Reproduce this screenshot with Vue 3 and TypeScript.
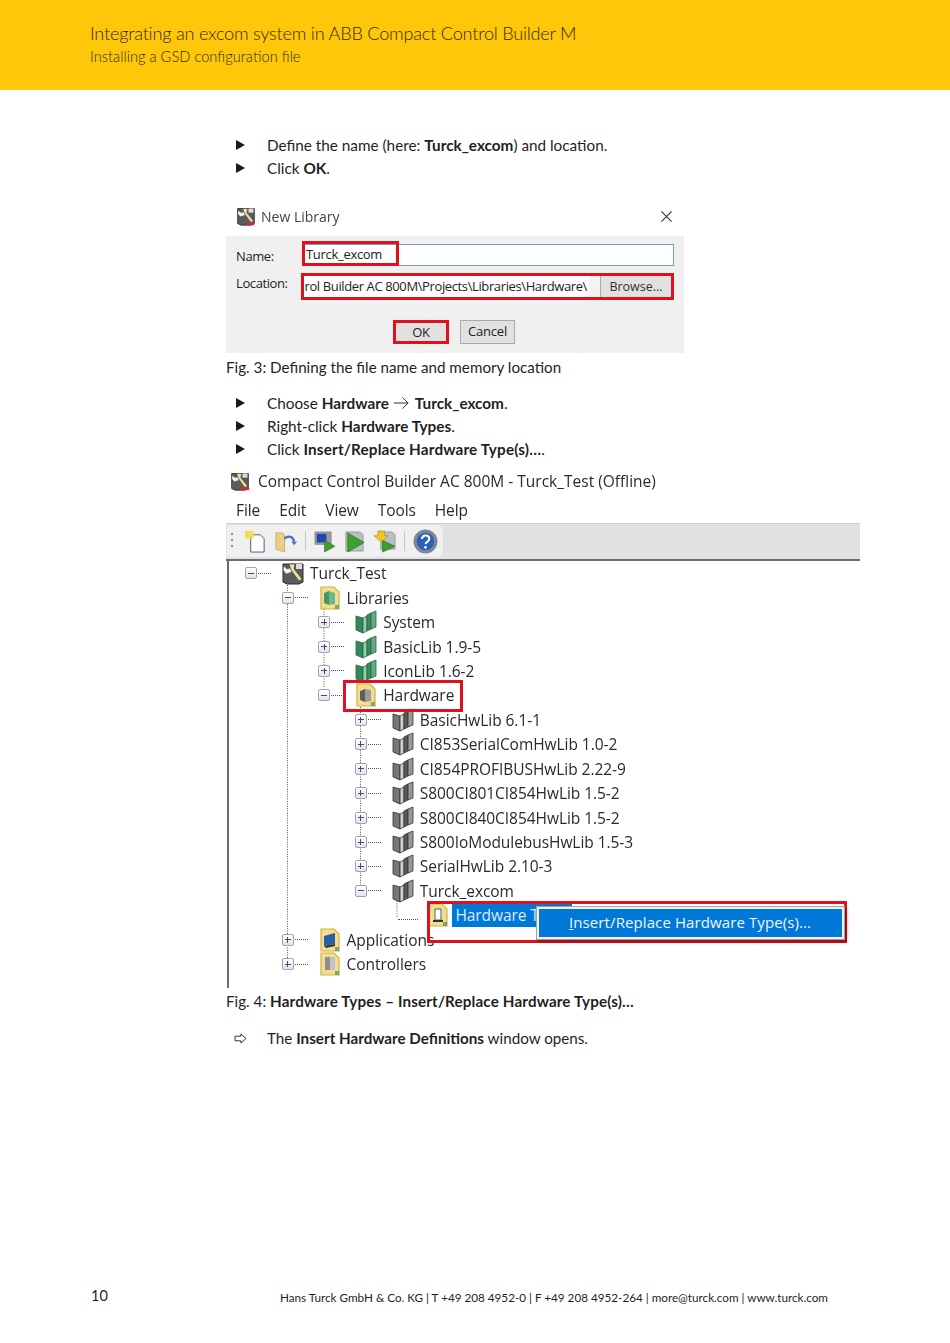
<script setup lang="ts">
interface Row {
  label: string
  depth: number
  exp: '' | 'plus' | 'minus'
  icon: string
  selected?: boolean
}

const rows: Row[] = [
  { label: 'Turck_Test', depth: 0, exp: 'minus', icon: 'root' },
  { label: 'Libraries', depth: 1, exp: 'minus', icon: 'f-lib' },
  { label: 'System', depth: 2, exp: 'plus', icon: 'book-g' },
  { label: 'BasicLib 1.9-5', depth: 2, exp: 'plus', icon: 'book-g' },
  { label: 'IconLib 1.6-2', depth: 2, exp: 'plus', icon: 'book-g' },
  { label: 'Hardware', depth: 2, exp: 'minus', icon: 'f-hw' },
  { label: 'BasicHwLib 6.1-1', depth: 3, exp: 'plus', icon: 'book-k' },
  { label: 'CI853SerialComHwLib 1.0-2', depth: 3, exp: 'plus', icon: 'book-k' },
  { label: 'CI854PROFIBUSHwLib 2.22-9', depth: 3, exp: 'plus', icon: 'book-k' },
  { label: 'S800CI801CI854HwLib 1.5-2', depth: 3, exp: 'plus', icon: 'book-k' },
  { label: 'S800CI840CI854HwLib 1.5-2', depth: 3, exp: 'plus', icon: 'book-k' },
  { label: 'S800IoModulebusHwLib 1.5-3', depth: 3, exp: 'plus', icon: 'book-k' },
  { label: 'SerialHwLib 2.10-3', depth: 3, exp: 'plus', icon: 'book-k' },
  { label: 'Turck_excom', depth: 3, exp: 'minus', icon: 'book-k' },
  { label: 'Hardware Types', depth: 4, exp: '', icon: 'f-type', selected: true },
  { label: 'Applications', depth: 1, exp: 'plus', icon: 'f-app' },
  { label: 'Controllers', depth: 1, exp: 'plus', icon: 'f-ctl' }
]

const rowIndent = (d: number) => ({ paddingLeft: `${16 + d * 36.6}px` })

const vLines = [
  { x: 60.5, y1: 24, y2: 403 },
  { x: 97, y1: 48, y2: 126 },
  { x: 133.5, y1: 146, y2: 326 },
  { x: 170, y1: 340, y2: 357 }
]
</script>

<template>
  <div class="page">
    <svg class="defs" width="0" height="0" aria-hidden="true">
      <symbol id="book-g" viewBox="0 0 24 24">
        <path d="M2 6l7 2v15l-7-3z" fill="#2f8a5a" stroke="#2f5f48" stroke-width=".8" />
        <path d="M9 8l4-2v15l-4 2z" fill="#8fd0aa" stroke="#2f5f48" stroke-width=".8" />
        <path d="M13 5l4-2v16l-4 2z" fill="#3b8a5e" stroke="#2f5f48" stroke-width=".8" />
        <path d="M17 3l5-2v16l-5 2z" fill="#5fae82" stroke="#2f5f48" stroke-width=".8" />
      </symbol>
      <symbol id="book-k" viewBox="0 0 24 24">
        <path d="M2 6l7 2v15l-7-3z" fill="#777" stroke="#333" stroke-width=".8" />
        <path d="M9 8l4-2v15l-4 2z" fill="#d0d0d0" stroke="#333" stroke-width=".8" />
        <path d="M13 5l4-2v16l-4 2z" fill="#5b5b5b" stroke="#333" stroke-width=".8" />
        <path d="M17 3l5-2v16l-5 2z" fill="#999" stroke="#333" stroke-width=".8" />
      </symbol>
      <symbol id="root" viewBox="0 0 24 24">
        <path d="M2 3h20v18l-4 2H6l-4-2z" fill="#5a5a60" stroke="#2d2d30" />
        <path d="M8 3l2 6 8 11 3-2-8-10 1-5z" fill="#efe3a8" stroke="#5a5230" stroke-width=".8" />
        <path d="M3 5l3 3 3-1 2 4-6 2-3-4z" fill="#f5f5f5" stroke="#444" stroke-width=".5" />
        <path d="M15 3h6v5h-6z" fill="#dcdcdc" />
      </symbol>
      <symbol id="folder" viewBox="0 0 20 24">
        <path d="M1 1h13l5 5v17H1z" fill="#f3dd8e" stroke="#d6ae48" stroke-width="1.200" />
      </symbol>
    </svg>

    <header class="hero">
      <div class="hero-title">Integrating an excom system in ABB Compact Control Builder M</div>
      <div class="hero-sub">Installing a GSD configuration file</div>
    </header>

    <main class="content">
      <ul class="steps first">
        <li><i class="tri"></i><span>Define the name (here: <b>Turck_excom</b>) and location.</span></li>
        <li><i class="tri"></i><span>Click <b>OK</b>.</span></li>
      </ul>

      <figure class="dialog shot">
        <div class="dlg-title">
          <svg class="dlg-icon" viewBox="0 0 24 24">
            <use href="#root" />
            <path d="M12 20h10v3H12z" fill="#d8262c" />
          </svg>
          <span>New Library</span>
          <svg class="dlg-x" viewBox="0 0 14 14"><path d="M1.500 1.500l11 11M12.500 1.500l-11 11" stroke="#333" stroke-width="1.200" /></svg>
        </div>
        <div class="dlg-body">
          <div class="dlg-row name">
            <label>Name:</label>
            <div class="input">
              <span class="name-val">Turck_excom</span>
            </div>
          </div>
          <div class="dlg-row loc">
            <label>Location:</label>
            <div class="loc-box">
              <div class="loc-input"><span>rol Builder AC 800M\Projects\Libraries\Hardware\</span></div>
              <div class="loc-gap"></div>
              <div class="browse">Browse...</div>
            </div>
          </div>
          <div class="dlg-btns">
            <div class="btn ok">OK</div>
            <div class="btn">Cancel</div>
          </div>
        </div>
      </figure>
      <figcaption class="cap cap1">Fig. 3: Defining the file name and memory location</figcaption>

      <ul class="steps second">
        <li>
          <i class="tri"></i>
          <span>Choose <b>Hardware</b>
            <svg class="arrow" viewBox="0 0 18 14"><path d="M1 7h15M10 1l6 6-6 6" fill="none" stroke="#222" stroke-width="1" /></svg>
            <b>Turck_excom</b>.</span>
        </li>
        <li><i class="tri"></i><span>Right-click <b>Hardware Types</b>.</span></li>
        <li><i class="tri"></i><span>Click <b class="wide">Insert/Replace Hardware Type(s)…</b>.</span></li>
      </ul>

      <figure class="app shot">
        <div class="app-title">
          <svg class="app-icon" viewBox="0 0 24 24">
            <use href="#root" />
            <path d="M12 20h11v3H12z" fill="#d8262c" />
          </svg>
          <span>Compact Control Builder AC 800M - Turck_Test (Offline)</span>
        </div>
        <nav class="menu">
          <span>File</span><span>Edit</span><span>View</span><span>Tools</span><span>Help</span>
        </nav>
        <div class="toolbar">
          <div class="tool-group">
            <i class="grip"></i>
            <svg class="tool" viewBox="0 0 24 24">
              <path d="M7 5h10l4 4v14H7z" fill="#fff" stroke="#3b5e86" />
              <path d="M1 1h9v8H1z" fill="#f5d95a" />
            </svg>
            <svg class="tool" viewBox="0 0 24 24">
              <path d="M2 3h7l2 2v18l-9-3z" fill="#e9cf86" stroke="#b69a4e" stroke-width=".7" />
              <path d="M11 9c4-4 9-2 10 3" fill="none" stroke="#4d6ec9" stroke-width="2.400" />
              <path d="M18 12h6l-3 4z" fill="#4d6ec9" />
            </svg>
            <i class="sep"></i>
            <svg class="tool" viewBox="0 0 24 24">
              <path d="M2 2h17v13H2z" fill="#9b9b9b" stroke="#777" stroke-width=".6" />
              <path d="M4 4h10v9H4z" fill="#1c47b8" />
              <path d="M12 11l11 6-11 6z" fill="#3fa02d" stroke="#2b6d1f" stroke-width=".6" />
            </svg>
            <svg class="tool" viewBox="0 0 24 24">
              <path d="M3 2h15l3 3v17H3z" fill="#b9bfc6" stroke="#7c858d" stroke-width=".7" />
              <path d="M5 3l17 10L5 23z" fill="#3fa02d" stroke="#2b6d1f" stroke-width=".7" />
            </svg>
            <svg class="tool" viewBox="0 0 24 24">
              <path d="M8 2h12l3 3v15H8z" fill="#b9bfc6" stroke="#7c858d" stroke-width=".7" />
              <path d="M5 1h7v5h4l-7 7-8-7h4z" fill="#eec52a" stroke="#a28417" stroke-width=".6" />
              <path d="M10 11l13 6-13 6z" fill="#3fa02d" stroke="#2b6d1f" stroke-width=".7" />
            </svg>
            <i class="sep"></i>
            <svg class="tool help" viewBox="0 0 24 24">
              <circle cx="12" cy="12" r="11.500" fill="#7d8798" />
              <circle cx="12" cy="12" r="8.400" fill="#2b5fb8" />
              <path d="M8.600 9.500c.5-4.500 7-4.200 7 0 0 2.600-3.400 2.600-3.500 5" fill="none" stroke="#fff" stroke-width="2" />
              <circle cx="12" cy="17.600" r="1.300" fill="#fff" />
            </svg>
          </div>
        </div>
        <div class="tree">
          <svg class="guides" width="632" height="427" aria-hidden="true">
            <line
              v-for="l in vLines"
              :key="l.x"
              :x1="l.x"
              :x2="l.x"
              :y1="l.y1"
              :y2="l.y2"
              stroke="#555"
              stroke-dasharray="1 1.400"
            />
          </svg>
          <div
            v-for="r in rows"
            :key="r.label"
            class="row"
            :style="rowIndent(r.depth)"
          >
            <span v-if="r.exp" class="exp">
              <i class="h"></i><i v-if="r.exp === 'plus'" class="v"></i>
            </span>
            <span v-else class="exp none"></span>
            <span class="dots" :class="{ long: !r.exp }"></span>
            <span class="ico">
              <svg v-if="r.icon.startsWith('book') || r.icon === 'root'" viewBox="0 0 24 24">
                <use :href="`#${r.icon}`" />
              </svg>
              <svg v-else viewBox="0 0 20 24">
                <use href="#folder" />
                <g v-if="r.icon === 'f-lib'">
                  <path d="M4 7l5-2v14l-5-2z" fill="#3f9a68" />
                  <path d="M9 5l6 2v11l-6 1z" fill="#6fb68f" />
                </g>
                <g v-if="r.icon === 'f-hw'">
                  <path d="M4 8l5-2v13l-5-2z" fill="#5e5e5e" />
                  <path d="M9 6l6 1v11l-6 1z" fill="#9c9c9c" />
                </g>
                <g v-if="r.icon === 'f-type'">
                  <path d="M7 6h6v11H7z" fill="#fff" stroke="#3f6f56" />
                  <path d="M5 17h10v2H5z" fill="#333" />
                </g>
                <g v-if="r.icon === 'f-app'">
                  <path d="M4 8l11-3v11L4 18z" fill="#2c5ea8" />
                  <path d="M4 18l11-2v2l-9 2z" fill="#333" />
                </g>
                <g v-if="r.icon === 'f-ctl'">
                  <path d="M5 5h5v13H5z" fill="#8d8d93" />
                  <path d="M10 5h5v13h-5z" fill="#c2c2c8" />
                </g>
                <path d="M15 19h4v4h-4z" fill="#3f9a68" opacity=".7" />
              </svg>
            </span>
            <span class="lbl" :class="{ sel: r.selected }">{{ r.selected ? 'Hardware T' : r.label }}</span>
          </div>

          <div class="mark mark-hw"></div>
          <div class="mark mark-ctx"></div>
          <div class="ctx">
            <div class="ctx-item"><span class="ul">I</span>nsert/Replace Hardware Type(s)...</div>
          </div>
        </div>
      </figure>
      <figcaption class="cap cap2">Fig. 4: <b class="wide">Hardware Types – Insert/Replace Hardware Type(s)…</b></figcaption>

      <div class="result">
        <svg class="res-arrow" viewBox="0 0 14 12"><path d="M1 3.500h6.500V1l5.500 5-5.500 5V8.500H1z" fill="none" stroke="#222" stroke-width="1" /></svg>
        <span>The <b>Insert Hardware Definitions</b> window opens.</span>
      </div>
    </main>

    <footer class="foot">
      <span class="pg">10</span>
      <span class="addr">Hans Turck GmbH &amp; Co. KG | T +49 208 4952-0 | F +49 208 4952-264 | more@turck.com | www.turck.com</span>
    </footer>
  </div>
</template>

<style scoped>
.page {
  width: 950px;
  height: 1343px;
  display: flex;
  flex-direction: column;
  background: #fff;
  font-family: Lato, "Noto Sans", sans-serif;
  color: #1f1f1f;
  overflow: hidden;
}
.defs { position: absolute; }
.hero {
  height: 90px;
  box-sizing: border-box;
  padding: 21px 0 0 90px;
  background: #ffc709;
  color: #352c06;
  flex: none;
  font-weight: 300;
}
.hero-title { font-size: 18.200px; line-height: 25px; letter-spacing: -.25px; }
.hero-sub { font-size: 14.700px; line-height: 20px; }
.content { padding: 0 0 0 226px; flex: 1; }
.steps { list-style: none; margin: 0; padding: 0 0 0 10px; font-size: 15.300px; line-height: 23px; }
.steps li { display: flex; align-items: center; height: 23px; }
.steps b, .cap b, .result b { font-weight: 700; }
.steps b.wide, .cap b.wide { letter-spacing: .15px; }
.first { padding-top: 44px; }
.second { padding-top: 15px; }
.tri {
  width: 0; height: 0; flex: none;
  border-left: 9px solid #1a1a1a;
  border-top: 5px solid transparent;
  border-bottom: 5px solid transparent;
  margin: -2px 22px 0 0;
}
.arrow { width: 17px; height: 14px; vertical-align: -1px; margin: 0 5px 0 4px; }
.shot { margin: 0; filter: blur(.35px); }
.dialog { width: 458px; margin-top: 25px; font-family: "Open Sans", sans-serif; font-size: 13.500px; color: #222; }
.dlg-title { height: 31px; box-sizing: border-box; padding: 0 10px 9px; display: flex; align-items: center; font-size: 14px; color: #44444a; }
.dlg-icon { width: 20px; height: 20px; margin-right: 5px; }
.dlg-x { width: 13px; height: 13px; margin-left: auto; margin-right: 1px; }
.dlg-body { height: 117px; box-sizing: border-box; background: #f0f0f0; padding: 6px 10px 0; position: relative; }
.dlg-row { display: flex; align-items: center; }
.dlg-row label { width: 66px; flex: none; font-size: 13px; letter-spacing: -.4px; }
.name label { padding-top: 4px; }
.loc label { padding-bottom: 8px; }
.input {
  width: 372px; height: 22px; box-sizing: border-box; margin-top: 2px;
  background: #fff; border: 1px solid #6aa2cc; position: relative;
  display: flex; align-items: center;
}
.name-val {
  font-size: 13px; letter-spacing: -.3px; box-sizing: border-box;
  height: 25px; width: 97px; margin: -3px 0 0 -1px; padding: 0 0 0 1px; line-height: 20px;
  border: 3px solid #e0101c;
}
.loc { margin-top: 7px; }
.loc-box {
  width: 373px; height: 27px; box-sizing: border-box; margin-left: -1px;
  border: 3px solid #e0101c; background: #e6e6e6; display: flex;
}
.loc-input {
  width: 285px; background: #fff; display: flex; justify-content: flex-end;
  white-space: nowrap; font-size: 13px; letter-spacing: -.38px; line-height: 21px; padding-right: 2px; box-sizing: border-box;
}
.loc-gap { width: 11px; background: #f3f3f3; }
.browse { flex: 1; text-align: center; font-size: 12.500px; line-height: 22px; color: #333; background: #e1e1e1; border-left: 1px solid #adadad; }
.dlg-btns { display: flex; gap: 11px; margin-top: 20px; padding-left: 157px; }
.btn {
  width: 55px; height: 24px; box-sizing: border-box; text-align: center; font-size: 13px; letter-spacing: -.2px;
  line-height: 21px; background: #e1e1e1; border: 1px solid #a9a9a9;
}
.btn.ok { width: 56px; border: 3px solid #e0101c; line-height: 18px; }
.cap { font-size: 15.200px; line-height: 20px; }
.cap1 { padding-top: 4px; }
.app { width: 634px; margin-top: 5px; font-family: "Open Sans", sans-serif; color: #2a2a2a; }
.app-title { display: flex; align-items: center; height: 29px; padding-left: 4px; font-size: 15.500px; }
.app-icon { width: 20px; height: 22px; margin-right: 8px; }
.menu { display: flex; gap: 19px; height: 28px; box-sizing: border-box; padding: 2px 0 0 10px; align-items: center; font-size: 15.500px; letter-spacing: -.1px; }
.toolbar {
  height: 38px; box-sizing: border-box; background: #e1e1e1;
  border-top: 1px solid #d0d0d0; border-bottom: 2px solid #6d6d6d; padding: 1px 0 0 1px;
}
.tool-group {
  width: 216px; height: 32px; background: #f0f0f0; border-radius: 0 6px 6px 0;
  display: flex; align-items: center; padding-left: 4px; box-sizing: border-box;
}
.grip { flex: none; width: 2px; height: 16px; background: repeating-linear-gradient(#888 0 2px, transparent 2px 6px); margin-right: 11px; }
.tool { width: 23px; height: 23px; margin-right: 7px; flex: none; }
.tool.help { width: 25px; height: 25px; margin-left: 1px; margin-right: 0; }
.sep { flex: none; width: 1px; height: 20px; background: #c6c6c6; margin: 0 7px 0 1px; }
.tree {
  position: relative; height: 427px; box-sizing: border-box;
  border-left: 2px solid #6d6d6d; width: 634px; margin-left: 1px;
}
.guides { position: absolute; left: -2px; top: 0; }
.row {
  height: 24.440px; display: flex; align-items: center; position: relative;
  font-size: 15.500px; letter-spacing: -.05px;
}
.exp {
  width: 12px; height: 12px; flex: none; box-sizing: border-box; border: 1px solid #9fa3ad; border-radius: 2px;
  background: linear-gradient(#fff, #e4e4ea); position: relative;
}
.exp.none { border: 0; background: none; }
.exp .h { position: absolute; left: 2px; right: 2px; top: 4.500px; height: 1px; background: #3a4f80; }
.exp .v { position: absolute; top: 2px; bottom: 2px; left: 4.500px; width: 1px; background: #3a4f80; }
.dots { width: 13px; flex: none; border-top: 1px dotted #555; margin: 0 10px 0 1px; }
.dots.long { width: 20px; margin: 8px 8px 0 -5px; }
.ico { width: 24px; height: 24px; flex: none; display: flex; align-items: center; justify-content: center; margin-right: 4px; }
.ico svg { width: 24px; height: 24px; }
.lbl { white-space: nowrap; margin-left: 1px; }
.lbl.sel {
  color: #dfeaff; background: #0078d7; width: 120px; padding-left: 3px; margin-left: -2px; line-height: 24px; box-sizing: border-box;
  align-self: flex-start;
}
.mark { position: absolute; border: 3px solid #e0101c; box-sizing: border-box; pointer-events: none; }
.mark-hw { left: 114px; top: 119px; width: 120px; height: 32px; }
.mark-ctx { left: 198px; top: 340px; width: 420px; height: 42px; }
.ctx {
  position: absolute; left: 307px; top: 345px; width: 309px; height: 34px; box-sizing: border-box;
  background: #f0f0f0; border: 1px solid #a0a0a0; padding: 2px; box-shadow: 2px 2px 3px rgba(0,0,0,.35);
}
.ctx-item {
  height: 100%; background: #0078d7; color: #f0f6ff; font-size: 15px; letter-spacing: .1px;
  line-height: 26px; padding-left: 30px;
}
.ul { text-decoration: underline; }
.cap2 { padding-top: 3px; }
.result { display: flex; align-items: center; font-size: 15.200px; line-height: 23px; margin-top: 16px; padding-left: 8px; }
.res-arrow { width: 13px; height: 11px; margin-right: 20px; }
.foot {
  height: 56px; flex: none; position: relative; display: flex; padding: 0 122px 0 91px; justify-content: space-between; font-size: 11.700px; box-sizing: border-box;
}
.pg { font-size: 14.500px; }
.addr { padding-top: 3px; }
</style>
